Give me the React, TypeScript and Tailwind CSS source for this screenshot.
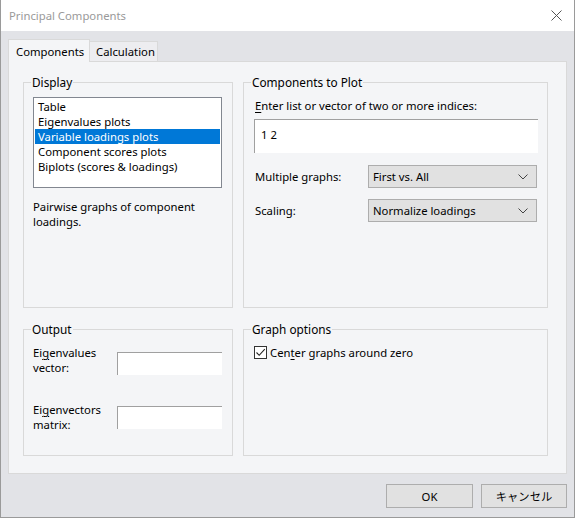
import React from 'react';

const font = { fontFamily: '"Noto Sans", "Noto Sans CJK JP", sans-serif' };

const Chevron = () => (
  <svg width="10" height="6" viewBox="0 0 10 6" className="shrink-0">
    <path d="M0.5 0.5 L5 5 L9.5 0.5" fill="none" stroke="#444" strokeWidth="1" />
  </svg>
);

const Select = ({ value }: { value: string }) => (
  <div className="flex h-[23px] w-[169px] items-center justify-between border border-[#adadad] bg-[#e1e1e1] pl-[4px] pr-[8px]">
    <span>{value}</span>
    <Chevron />
  </div>
);

const Group = ({ title, className, children }: { title: string; className?: string; children: React.ReactNode }) => (
  <fieldset className={`border border-[#d9d9d9] ${className ?? ''}`}>
    <legend className="ml-[7px] px-[1px] text-[11.8px] leading-[16px]">{title}</legend>
    {children}
  </fieldset>
);

export default function App() {
  const items = [
    'Table',
    'Eigenvalues plots',
    'Variable loadings plots',
    'Component scores plots',
    'Biplots (scores & loadings)',
  ];

  return (
    <div
      style={font}
      className="flex h-[518px] w-[575px] flex-col border-x border-b border-[#9a9a9a] bg-[#e2e3e7] text-[11.3px] leading-[15px] text-black"
    >
      {/* title bar */}
      <div className="flex h-[31px] shrink-0 items-center justify-between bg-white pl-[8px] pr-[12px]">
        <span className="text-[11.3px] text-[#9a9a9a]">Principal Components</span>
        <svg width="11" height="11" viewBox="0 0 11 11">
          <path d="M0.5 0.5 L10.5 10.5 M10.5 0.5 L0.5 10.5" stroke="#555" strokeWidth="1" />
        </svg>
      </div>

      <div className="flex flex-1 flex-col px-[7px] pt-[8px]">
        {/* tabs */}
        <div className="flex h-[22px] items-end">
          <div className="relative z-10 -mb-px flex h-[23px] w-[82px] items-center border border-b-0 border-[#d9d9d9] bg-[#f4f5f7] pl-[7px]">
            Components
          </div>
          <div className="flex h-[20px] w-[68px] items-center border border-b-0 border-l-0 border-[#d9d9d9] bg-[#ededf0] pl-[6px]">
            Calculation
          </div>
        </div>

        {/* pane */}
        <div className="flex h-[413px] flex-col border border-[#d9d9d9] bg-[#f4f5f7] pb-[17px] pl-[14px] pr-[17px] pt-[12px]">
          <div className="flex gap-[10px]">
            <Group title="Display" className="h-[234px] w-[210px]">
              <div className="px-[9px] pt-[7px]">
                <div className="h-[91px] w-[189px] border border-[#828790] bg-white px-[1px] pt-[1px]">
                  {items.map((t, i) => (
                    <div
                      key={t}
                      className={`h-[15px] pl-[3px] ${i === 2 ? 'bg-[#0078d7] text-white' : ''}`}
                    >
                      {t}
                    </div>
                  ))}
                </div>
                <p className="mt-[11px] w-[175px]">Pairwise graphs of component loadings.</p>
              </div>
            </Group>

            <Group title="Components to Plot" className="h-[234px] w-[305px]">
              <div className="pl-[10px] pt-[8px]">
                <div className="pl-[1px]">
                  <span className="underline underline-offset-2">E</span>nter list or vector of two or more indices:
                </div>
                <div className="mt-[6px] h-[34px] w-[284px] border-l border-t border-[#a0a0a0] bg-white pl-[6px] pt-[7px]">
                  1 2
                </div>
                <div className="mt-[12px] flex items-center">
                  <span className="w-[114px] pl-[1px]">Multiple graphs:</span>
                  <Select value="First vs. All" />
                </div>
                <div className="mt-[11px] flex items-center">
                  <span className="w-[114px] pl-[1px]">Scaling:</span>
                  <Select value="Normalize loadings" />
                </div>
              </div>
            </Group>
          </div>

          <div className="mt-[13px] flex gap-[10px]">
            <Group title="Output" className="h-[135px] w-[210px]">
              <div className="pl-[9px] pt-[8px]">
                <div className="flex">
                  <div className="w-[84px]">
                    Ei<span className="underline underline-offset-2">g</span>envalues
                    <br />
                    vector:
                  </div>
                  <div className="mt-[7px] h-[23px] w-[105px] border-l border-t border-[#a0a0a0] bg-white" />
                </div>
                <div className="mt-[27px] flex">
                  <div className="w-[84px]">
                    Ei<span className="underline underline-offset-2">g</span>envectors
                    <br />
                    matrix:
                  </div>
                  <div className="mt-[4px] h-[23px] w-[105px] border-l border-t border-[#a0a0a0] bg-white" />
                </div>
              </div>
            </Group>

            <Group title="Graph options" className="h-[135px] w-[305px]">
              <div className="flex items-center gap-[3px] pl-[10px] pt-[8px]">
                <div className="flex h-[13px] w-[13px] items-center justify-center border border-[#333] bg-white">
                  <svg width="11" height="11" viewBox="0 0 11 11">
                    <path d="M1.5 5.5 L4.2 8.3 L9.8 2.2" fill="none" stroke="#222" strokeWidth="1.1" />
                  </svg>
                </div>
                <span>
                  Cen<span className="underline underline-offset-2">t</span>er graphs around zero
                </span>
              </div>
            </Group>
          </div>
        </div>

        {/* buttons */}
        <div className="mt-[10px] flex justify-end gap-[8px]">
          <button className="h-[24px] w-[87px] border border-[#adadad] bg-[#e1e1e1]">OK</button>
          <button className="h-[24px] w-[86px] border border-[#adadad] bg-[#e1e1e1]">キャンセル</button>
        </div>
      </div>
    </div>
  );
}
